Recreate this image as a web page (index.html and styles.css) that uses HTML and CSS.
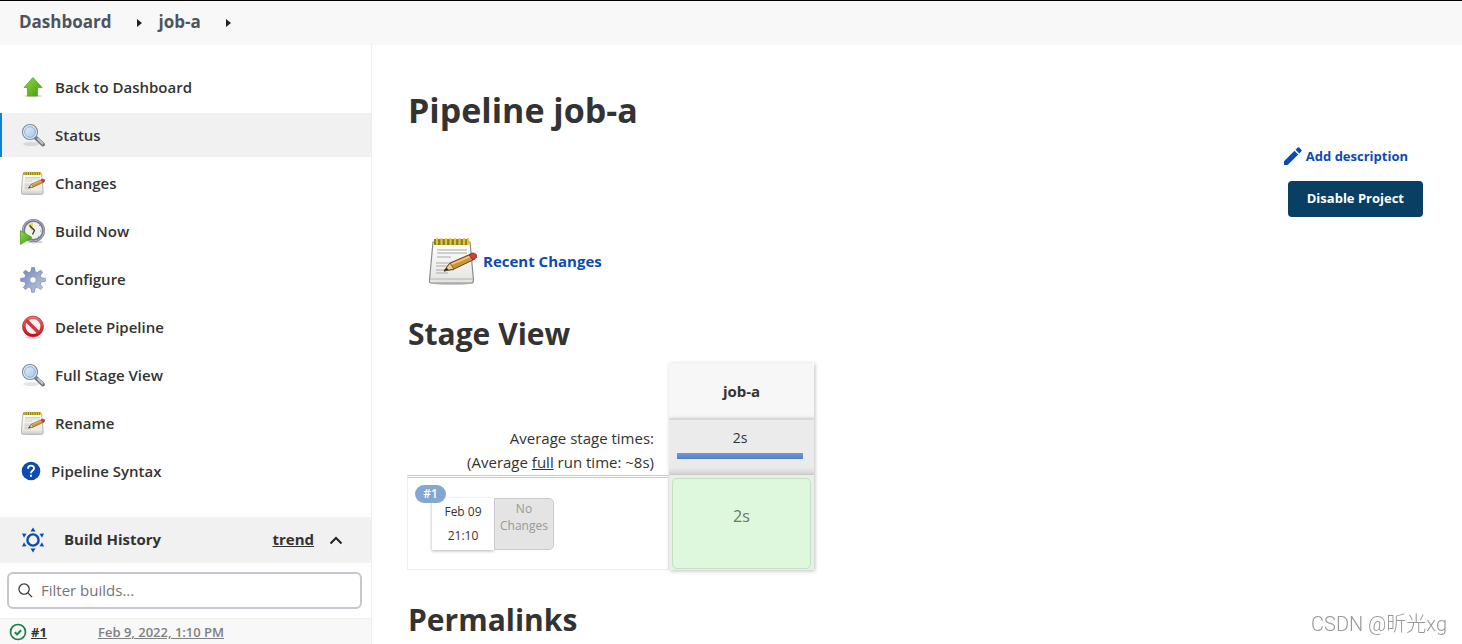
FILE: index.html
```html
<!DOCTYPE html>
<html lang="en">
<head>
<meta charset="utf-8">
<title>Pipeline job-a</title>
<link rel="stylesheet" href="styles.css">
</head>
<body>
<svg class="defs" aria-hidden="true">
  <defs>
    <linearGradient id="green" x1="0" y1="0" x2="1" y2="1"><stop offset="0" stop-color="#8ed943"/><stop offset="1" stop-color="#419c0e"/></linearGradient>
    <linearGradient id="lens" x1="0" y1="0" x2="1" y2="1"><stop offset="0" stop-color="#eaf4fe"/><stop offset="1" stop-color="#9cc0e6"/></linearGradient>
    <linearGradient id="paper" x1="0" y1="0" x2="0" y2="1"><stop offset="0" stop-color="#ffffff"/><stop offset="1" stop-color="#e4e4e0"/></linearGradient>
    <linearGradient id="gear" x1="0" y1="0" x2="1" y2="1"><stop offset="0" stop-color="#7083b5"/><stop offset="1" stop-color="#c2cce4"/></linearGradient>
    <linearGradient id="red" x1="0" y1="0" x2="0" y2="1"><stop offset="0" stop-color="#e66a6a"/><stop offset="1" stop-color="#c9101a"/></linearGradient>
    <symbol id="i-search" viewBox="0 0 24 24">
      <ellipse cx="10" cy="21" rx="8" ry="2" fill="#000" opacity=".1"/>
      <path d="M15 15l7 6.500" stroke="#777" stroke-width="4" stroke-linecap="round"/>
      <path d="M17 16l4.500 4.500" stroke="#c4c4c0" stroke-width="2" stroke-linecap="round"/>
      <circle cx="9" cy="9" r="7.500" fill="url(#lens)" stroke="#7d8794" stroke-width="1.200"/>
      <circle cx="9" cy="9" r="6.200" fill="none" stroke="#e9edf2" stroke-width="1.200"/>
      <circle cx="9" cy="9" r="5.400" fill="none" stroke="#6f9bd0" stroke-width=".7"/>
    </symbol>
    <symbol id="i-notepad" viewBox="0 0 48 48">
      <ellipse cx="23" cy="46" rx="21" ry="2" fill="#000" opacity=".2"/>
      <path d="M4 5h37l3.500 38q0 3-2 3H2q-2 0-1.500-3z" fill="url(#paper)" stroke="#8b8b88" stroke-width="1.200"/>
      <path d="M1 42h43" stroke="#b5b5b0" stroke-width="1"/>
      <path d="M8 13h30M8 16h30M8 20h14M7 26h24M7 29h24M7 33h18M7 36h12" stroke="#a9a9a9" stroke-width="1"/>
      <path d="M5 2h35v6H5z" fill="#8f7e1c"/>
      <path d="M8 2v5M12.500 2v5M17 2v5M21.500 2v5M26 2v5M30.500 2v5M35 2v5M39 2v5" stroke="#dcc640" stroke-width="2.200" stroke-linecap="round"/>
      <path d="M15 34l6-8 21-9 4 5-21 10z" fill="#d0913c" stroke="#6b4415" stroke-width="1"/>
      <path d="M22 27.500l20-8.500" stroke="#f0c878" stroke-width="1.600"/>
      <path d="M15 34l6-8 4 6z" fill="#eccf92" stroke="#6b4415" stroke-width=".8"/>
      <path d="M15 34l2.500-3.300 2 2z" fill="#222"/>
      <path d="M40 18l3-2q5 0 5 4l-4 3z" fill="#db3a3a" stroke="#8f1d1d" stroke-width=".8"/>
    </symbol>
  </defs>
</svg>

<nav class="breadcrumbs" aria-label="Breadcrumb">
  <a href="#">Dashboard</a>
  <svg class="crumb-arrow" viewBox="0 0 5 8"><path d="M0 0l5 4-5 4z"/></svg>
  <a href="#">job-a</a>
  <svg class="crumb-arrow" viewBox="0 0 5 8"><path d="M0 0l5 4-5 4z"/></svg>
</nav>

<div class="page">
  <aside class="sidebar">
    <ul class="tasks">
      <li><a class="task" href="#">
        <svg class="task-icon" viewBox="0 0 24 24"><ellipse cx="12" cy="21" rx="9" ry="1.500" fill="#000" opacity=".15"/><path d="M12 2.500l9 10h-4.500v8.500h-10v-8.500H3z" fill="url(#green)" stroke="#55a81e" stroke-width=".8"/></svg>
        Back to Dashboard</a></li>
      <li><a class="task active" href="#" aria-current="page"><svg class="task-icon"><use href="#i-search"/></svg>Status</a></li>
      <li><a class="task" href="#"><svg class="task-icon"><use href="#i-notepad"/></svg>Changes</a></li>
      <li><a class="task" href="#">
        <svg class="task-icon" viewBox="0 0 24 24"><ellipse cx="14" cy="23" rx="8" ry="1.500" fill="#000" opacity=".2"/><circle cx="12.500" cy="11.500" r="10" fill="#f1f1ec" stroke="#77798e" stroke-width="3"/><circle cx="12.500" cy="11.500" r="10.500" fill="none" stroke="#babccc" stroke-width=".8"/><path d="M11 12L7 5.500 12 4z" fill="#e7d34c"/><path d="M8.500 6.500l5 5-2 4" fill="none" stroke="#333" stroke-width="1.300"/><path d="M18 7l1-1M19 12h1.500M17 17l1 1" stroke="#999"/><path d="M-.5 11.500l11.500 7-11.500 7z" fill="url(#green)" stroke="#3f9212" stroke-width=".7"/></svg>
        Build Now</a></li>
      <li><a class="task" href="#">
        <svg class="task-icon" viewBox="-1 -1 26 26"><g fill="url(#gear)" stroke="#7580a5" stroke-width=".7"><path fill-rule="evenodd" d="M10.500-.5h3l.8 4.500 2.400 1 3.500-2.600 2.300 2.300-2.600 3.500 1 2.400 4.500.8v3l-4.500.8-1 2.400 2.600 3.500-2.300 2.300-3.500-2.600-2.400 1-.8 4.500h-3l-.8-4.500-2.400-1-3.500 2.600-2.300-2.300 2.600-3.500-1-2.400-4.500-.8v-3l4.500-.8 1-2.400-2.600-3.500 2.300-2.300 3.500 2.600 2.400-1zM12 9.500a3.500 3.500 0 100 7 3.500 3.500 0 100-7z"/></g></svg>
        Configure</a></li>
      <li><a class="task" href="#">
        <svg class="task-icon" viewBox="0 0 24 24"><ellipse cx="12" cy="22.500" rx="8" ry="1.300" fill="#000" opacity=".15"/><circle cx="12" cy="11.500" r="9" fill="#f7f3f3" stroke="url(#red)" stroke-width="3.200"/><path d="M5.500 5.500l12.500 12.500" stroke="#d5333a" stroke-width="3.200"/><circle cx="12" cy="11.500" r="10.500" fill="none" stroke="#c4252c" stroke-width=".6"/></svg>
        Delete Pipeline</a></li>
      <li><a class="task" href="#"><svg class="task-icon"><use href="#i-search"/></svg>Full Stage View</a></li>
      <li><a class="task" href="#"><svg class="task-icon"><use href="#i-notepad"/></svg>Rename</a></li>
      <li><a class="task task-help" href="#">
        <svg class="help-icon" viewBox="0 0 20 20"><circle cx="10" cy="10" r="9.300" fill="#0b4bb3"/><path d="M7 7.800q0-3.200 3-3.200t3 2.700q0 1.400-1.600 2.500-1.400 1-1.400 2.500" fill="none" stroke="#fff" stroke-width="1.900"/><path d="M9 13.800h2v2H9z" fill="#fff"/></svg>
        Pipeline Syntax</a></li>
    </ul>

    <section class="history">
      <header class="history-head">
        <svg class="history-icon" viewBox="0 0 24 26"><circle cx="12" cy="13" r="5.600" fill="none" stroke="#0b4bb3" stroke-width="2.400"/><path fill="#0b4bb3" d="M12 .5l2.500 4h-5zM12 25.500l2.500-4h-5zM1 6.500l4.500.3-2.500 4zM23 6.500l-4.500.3 2.500 4zM1 19.500l4.500-.3-2.500-4zM23 19.500l-4.500-.3 2.500-4z"/></svg>
        <h2>Build History</h2>
        <a class="trend" href="#">trend</a>
        <button class="collapse" type="button" aria-label="Collapse build history"><svg viewBox="0 0 14 9"><path d="M1.500 7.500L7 2l5.500 5.500" fill="none" stroke="#222" stroke-width="2"/></svg></button>
      </header>
      <div class="filter">
        <svg viewBox="0 0 16 16" aria-hidden="true"><circle cx="6.500" cy="6.500" r="5.500" fill="none" stroke="#333" stroke-width="1.300"/><path d="M10.500 10.500l4.500 4.500" stroke="#333" stroke-width="1.300"/></svg>
        <input type="text" placeholder="Filter builds..." aria-label="Filter builds">
      </div>
      <div class="build">
        <svg viewBox="0 0 18 18" aria-label="Success"><circle cx="9" cy="9" r="7.500" fill="none" stroke="#1b8048" stroke-width="1.700"/><path d="M5.800 9.200l2.300 2.200 4-4.200" fill="none" stroke="#1b8048" stroke-width="2"/></svg>
        <a class="build-no" href="#">#1</a>
        <a class="build-date" href="#">Feb 9, 2022, 1:10 PM</a>
      </div>
    </section>
  </aside>

  <main class="main">
    <h1>Pipeline job-a</h1>
    <div class="actions">
      <a class="add-desc" href="#"><svg viewBox="0 0 18 18"><path d="M0 14.300L10.500 3.800l3.700 3.700L3.700 18H0zM11.600 2.700L13.700.6q.8-.8 1.600 0l2.100 2.100q.8.800 0 1.600l-2.100 2.100z" fill="#0b4bb3"/></svg>Add description</a>
      <button class="disable" type="button">Disable Project</button>
    </div>
    <a class="recent" href="#"><svg><use href="#i-notepad"/></svg>Recent Changes</a>

    <h2>Stage View</h2>
    <table class="stages">
      <thead>
        <tr><td class="blank"></td><th class="stage-name" scope="col">job-a</th></tr>
        <tr>
          <td class="totals">Average stage times:<br>(Average <u>full</u> run time: ~8s)</td>
          <td class="average">2s<div class="bar"></div></td>
        </tr>
      </thead>
      <tbody>
        <tr>
          <td class="run">
            <div class="run-box">
              <span class="badge">#1</span>
              <div class="run-time">Feb 09<br>21:10</div>
              <div class="run-changes">No<br>Changes</div>
            </div>
          </td>
          <td class="result"><div class="success">2s</div></td>
        </tr>
      </tbody>
    </table>

    <h2>Permalinks</h2>
  </main>
</div>
<div class="watermark">CSDN @昕光xg</div>
</body>
</html>
```
FILE: styles.css
```css
* { box-sizing: border-box; }
body {
  display: flex;
  flex-direction: column;
  margin: 0;
  height: 100vh;
  background: #fff;
  color: #333;
  font-family: "Open Sans", "Noto Sans", sans-serif;
  font-size: 14px;
}
a { color: inherit; text-decoration: none; }
svg { display: block; flex: none; overflow: visible; }
.defs { position: absolute; width: 0; height: 0; }

.breadcrumbs {
  display: flex;
  flex: none;
  align-items: center;
  height: 45px;
  padding: 0 19px 4px;
  border-top: 1px solid #000;
  background: #f8f8f8;
  color: #4d545d;
  font-size: 17px;
  font-weight: 700;
}
.crumb-arrow { width: 5px; height: 8px; margin: 4px 17px 0 25px; fill: #222; }

.page {
  display: grid;
  flex: 1;
  grid-template-columns: 372px 1fr;
  min-height: 0;
  overflow: hidden;
}
.sidebar { border-right: 1px solid #eee; }
.tasks {
  display: grid;
  gap: 4px;
  margin: 0;
  padding: 20px 0 24px;
  list-style: none;
}
.task {
  display: flex;
  align-items: center;
  gap: 10px;
  height: 44px;
  padding-left: 19px;
  border-left: 2px solid transparent;
  font-size: 15px;
  font-weight: 600;
}
.task.active { border-left-color: #0b84d6; background: #f1f1f1; }
.task-icon { width: 24px; height: 24px; }
.help-icon { width: 20px; height: 20px; }

.history-head {
  display: flex;
  align-items: center;
  height: 46px;
  padding: 0 28px 0 21px;
  background: #f1f1f1;
  font-weight: 700;
}
.history-icon { width: 24px; height: 26px; margin-right: 19px; }
.history-head h2 { flex: 1; margin: 0; font-size: 15px; line-height: 20px; padding-bottom: 2px; }
.trend { padding-bottom: 2px; font-size: 15px; line-height: 20px; text-decoration: underline; }
.collapse { margin-left: 15px; padding: 0; border: 0; background: none; }
.collapse svg { width: 14px; height: 9px; }
.filter {
  display: flex;
  align-items: center;
  gap: 8px;
  height: 37px;
  margin: 9px 9px 9px 7px;
  padding: 0 9px;
  border: 2px solid #c3c9ce;
  border-radius: 6px;
}
.filter svg { width: 15px; height: 15px; }
.filter input {
  flex: 1;
  min-width: 0;
  padding: 0 0 2px;
  border: 0;
  outline: 0;
  background: none;
  font: inherit;
  font-size: 15px;
}
.filter input::placeholder { color: #757575; }
.build {
  display: flex;
  align-items: center;
  height: 26px;
  padding-left: 9px;
  border-top: 1px solid #eee;
  background: #f8f8f8;
  font-size: 13px;
  font-weight: 700;
}
.build a { text-decoration: underline; }
.build svg { width: 18px; height: 18px; }
.build-no { width: 67px; margin-left: 4px; }
.build .build-date { color: #808080; font-weight: 600; }

.main { padding: 40px 39px 0 36px; }
.main h1, .main h2 { margin: 0; font-weight: 700; }
.main h1 { font-size: 34px; line-height: 50px; }
.main h2 { font-size: 30px; line-height: 40px; }
.actions {
  display: flex;
  flex-direction: column;
  align-items: flex-end;
  gap: 15px;
  margin-top: 11px;
  font-size: 13px;
  font-weight: 700;
}
.add-desc {
  display: flex;
  align-items: center;
  gap: 4px;
  margin-right: 15px;
  color: #0b4bb3;
  font-size: 13px;
  line-height: 20px;
}
.add-desc svg { width: 18px; height: 18px; }
.disable {
  height: 36px;
  padding: 0 19px 2px;
  border: 0;
  border-radius: 4px;
  background: #093f63;
  color: #fff;
  font: inherit;
}
.recent {
  display: inline-flex;
  align-items: center;
  gap: 6px;
  margin: 20px 0 29px 21px;
  color: #0b4bb3;
  font-size: 15px;
  font-weight: 700;
}
.recent svg { width: 48px; height: 48px; }

.stages { margin: 9px 0 30px -1px; border-spacing: 0; text-align: center; }
.stages td, .stages th { padding: 0; }
.blank { width: 262px; }
.stage-name, .average, .result { width: 145px; box-shadow: 1px 1px 4px rgba(0, 0, 0, .25); }
.stage-name { height: 55px; background: #f7f7f7; font-size: 15px; }
.stages .totals {
  height: 57px;
  padding: 8px 15px 0 0;
  font-size: 15px;
  line-height: 24px;
  text-align: right;
  vertical-align: top;
}
.stages .average {
  padding: 6px 11px 0 8px;
  border-top: 2px solid #d9d9d9;
  background: linear-gradient(#ebebeb 85%, #d5d5d5);
  line-height: 24px;
  vertical-align: top;
}
.bar { height: 6px; margin-top: 3px; background: linear-gradient(#7199d8, #527ec5); }
.run {
  height: 93px;
  border: 1px solid #eee;
  border-top: 3px double #ccc;
  vertical-align: top;
}
.run-box { position: relative; display: flex; margin: 20px 0 0 24px; font-size: 12px; }
.badge {
  position: absolute;
  top: -13px;
  left: -17px;
  width: 31px;
  border-radius: 9px;
  background: #84a7d1;
  color: #fff;
  font-weight: 600;
  line-height: 18px;
}
.run-time {
  width: 62px;
  height: 52px;
  padding-top: 2px;
  background: #fff;
  box-shadow: 0 1px 3px rgba(0, 0, 0, .3);
  line-height: 24px;
}
.run-changes {
  width: 60px;
  height: 52px;
  padding-top: 1px;
  border: 1px solid #ccc;
  border-radius: 0 5px 5px 0;
  background: #e4e4e4;
  color: #999;
  line-height: 17px;
}
.stages .result { padding: 3px 3px 1px; background: #e8eee8; }
.success {
  height: 91px;
  border: 1px solid #c4dfc4;
  border-radius: 5px;
  background: #ddf8dd;
  color: #667a66;
  font-size: 16px;
  line-height: 74px;
}
.watermark {
  position: fixed;
  right: 15px;
  bottom: 5px;
  color: #999;
  font-family: Roboto, "Noto Sans CJK SC", sans-serif;
  font-size: 20px;
  font-weight: 300;
  line-height: 30px;
}
```
